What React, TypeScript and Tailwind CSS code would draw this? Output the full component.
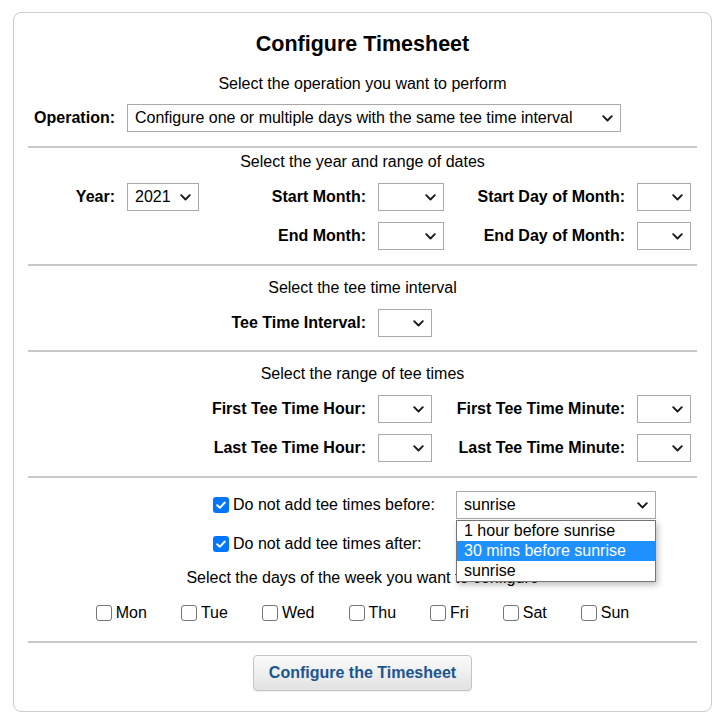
import React from "react";

function Chevron() {
    return (
        <svg width="11" height="7" viewBox="0 0 11 7" className="shrink-0">
            <path d="M1.2 1.2l4.3 4.3 4.3-4.3" fill="none" stroke="#1a1a1a" strokeWidth="1.9" strokeLinecap="round" strokeLinejoin="round" />
        </svg>
    );
}

function Select({ value, className }: { value?: string; className: string }) {
    return (
        <div className={`h-[28px] border border-[#a9a9a9] bg-white flex items-center justify-between pl-[7px] pr-[7px] ${className}`}>
            <span>{value}</span>
            <Chevron />
        </div>
    );
}

function Label({ text, className = "" }: { text: string; className?: string }) {
    return <div className={`text-right font-bold pr-3 whitespace-nowrap ${className}`}>{text}</div>;
}

function Checkbox({ checked }: { checked?: boolean }) {
    if (checked) {
        return (
            <span className="w-4 h-4 rounded-[3px] bg-[#0075ff] flex items-center justify-center shrink-0">
                <svg width="12" height="12" viewBox="0 0 12 12">
                    <path d="M2.2 6.3l2.6 2.6 5-5.4" fill="none" stroke="white" strokeWidth="2" strokeLinecap="round" strokeLinejoin="round" />
                </svg>
            </span>
        );
    }
    return <span className="w-4 h-4 rounded-[3px] border border-[#767676] bg-white shrink-0" />;
}

function Divider({ className = "" }: { className?: string }) {
    return <div className={`h-[2px] bg-[#c8c8c8] ${className}`} />;
}

const days = ["Mon", "Tue", "Wed", "Thu", "Fri", "Sat", "Sun"];
const beforeOptions = ["1 hour before sunrise", "30 mins before sunrise", "sunrise"];

export default function App() {
    return (
        <div className="min-h-screen bg-white pt-3 pl-[13px] font-['Liberation_Sans',Arial,sans-serif] text-[16px] leading-[20px] text-black">
            <div className="w-[699px] border border-[#cccccc] rounded-lg px-[14px] pt-[18px] pb-[20px]">
                {/* Title + operation */}
                <h2 className="text-center font-bold text-[21.5px] leading-[26px]">Configure Timesheet</h2>
                <p className="text-center mt-[17px]">Select the operation you want to perform</p>
                <div className="grid grid-cols-[99px_73px_178px_66px_193px_54px] items-center mt-[10px]">
                    <Label text="Operation:" />
                    <div className="col-span-5">
                        <Select value="Configure one or multiple days with the same tee time interval" className="w-[494px]" />
                    </div>
                </div>
                <Divider className="mt-[14px]" />

                {/* Dates */}
                <p className="text-center mt-1">Select the year and range of dates</p>
                <div className="grid grid-cols-[99px_73px_178px_66px_193px_54px] items-center gap-y-[11px] mt-[11px]">
                    <Label text="Year:" />
                    <Select value="2021" className="w-[72px]" />
                    <Label text="Start Month:" />
                    <Select className="w-[66px]" />
                    <Label text="Start Day of Month:" />
                    <Select className="w-[54px]" />

                    <Label text="End Month:" className="col-start-3" />
                    <Select className="w-[66px]" />
                    <Label text="End Day of Month:" />
                    <Select className="w-[54px]" />
                </div>
                <Divider className="mt-[14px]" />

                {/* Interval */}
                <p className="text-center mt-3">Select the tee time interval</p>
                <div className="grid grid-cols-[99px_73px_178px_66px_193px_54px] items-center mt-[11px]">
                    <Label text="Tee Time Interval:" className="col-start-3" />
                    <Select className="w-[54px]" />
                </div>
                <Divider className="mt-[13px]" />

                {/* Tee times */}
                <p className="text-center mt-3">Select the range of tee times</p>
                <div className="grid grid-cols-[99px_73px_178px_66px_193px_54px] items-center gap-y-[11px] mt-[11px]">
                    <Label text="First Tee Time Hour:" className="col-start-3" />
                    <Select className="w-[54px]" />
                    <Label text="First Tee Time Minute:" />
                    <Select className="w-[54px]" />

                    <Label text="Last Tee Time Hour:" className="col-start-3" />
                    <Select className="w-[54px]" />
                    <Label text="Last Tee Time Minute:" />
                    <Select className="w-[54px]" />
                </div>
                <Divider className="mt-[14px]" />

                {/* Sunrise / sunset + days */}
                <div className="grid grid-cols-[243px_200px] items-center gap-y-[11px] ml-[185px] mt-[13px]">
                    <label className="flex items-center gap-1">
                        <Checkbox checked />
                        <span>Do not add tee times before:</span>
                    </label>
                    <div className="relative">
                        <Select value="sunrise" className="w-[200px]" />
                        <ul className="absolute z-10 left-0 top-[29px] w-[200px] bg-white border border-[#767676] shadow-[2px_3px_6px_rgba(0,0,0,0.25)]">
                            {beforeOptions.map((opt, i) => (
                                <li
                                    key={opt}
                                    className={i === 1 ? "h-5 pl-[7px] bg-[#1e90ff] text-white" : "h-5 pl-[7px]"}
                                >
                                    {opt}
                                </li>
                            ))}
                        </ul>
                    </div>

                    <label className="flex items-center gap-1">
                        <Checkbox checked />
                        <span>Do not add tee times after:</span>
                    </label>
                    <Select value="sunset" className="w-[200px]" />
                </div>
                <p className="text-center mt-[10px]">Select the days of the week you want to configure</p>
                <div className="flex justify-center gap-[34px] mt-[15px]">
                    {days.map((d) => (
                        <label key={d} className="flex items-center gap-1">
                            <Checkbox />
                            <span>{d}</span>
                        </label>
                    ))}
                </div>
                <Divider className="mt-[18px]" />

                {/* Submit */}
                <div className="flex justify-center mt-3">
                    <button className="h-9 px-[15px] border border-[#c4c4c4] rounded bg-gradient-to-b from-[#fbfbfb] to-[#e2e2e2] font-bold text-[#1b5590] shadow-[0_1px_1px_rgba(0,0,0,0.06)]">
                        Configure the Timesheet
                    </button>
                </div>
            </div>
        </div>
    );
}
